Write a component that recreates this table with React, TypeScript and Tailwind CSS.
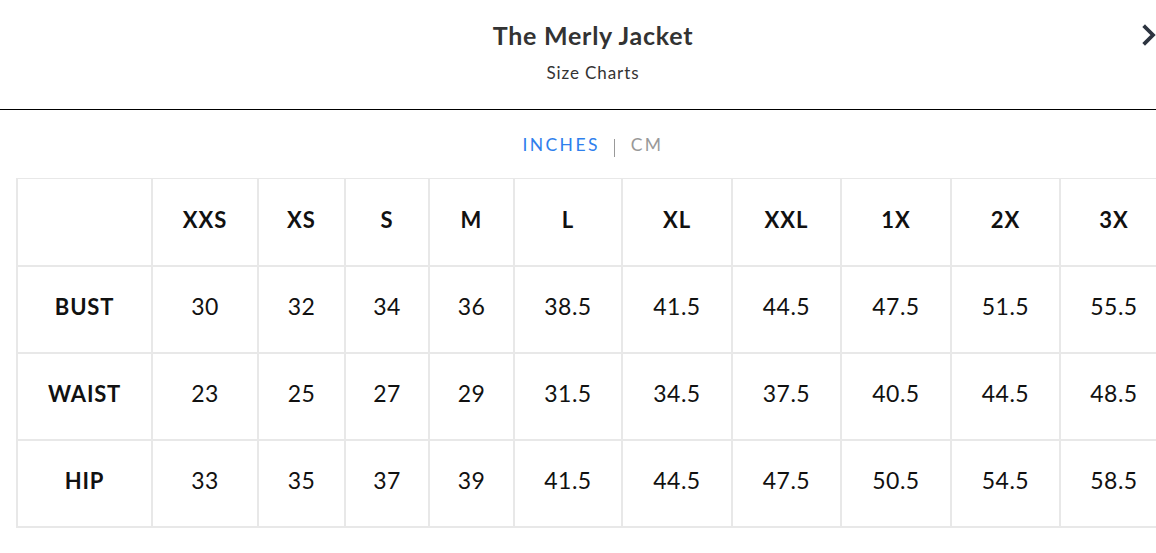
const sizes = ["XXS", "XS", "S", "M", "L", "XL", "XXL", "1X", "2X", "3X"];

const rows = [
  { label: "BUST", values: ["30", "32", "34", "36", "38.5", "41.5", "44.5", "47.5", "51.5", "55.5"] },
  { label: "WAIST", values: ["23", "25", "27", "29", "31.5", "34.5", "37.5", "40.5", "44.5", "48.5"] },
  { label: "HIP", values: ["33", "35", "37", "39", "41.5", "44.5", "47.5", "50.5", "54.5", "58.5"] },
];

const colWidths = [135, 106, 87, 84, 85, 108, 110, 109, 110, 109, 108];

const App = () => {
  return (
    <div className="w-[1156px] h-[553px] overflow-hidden bg-white font-['Lato',sans-serif] text-[#111]">
      <div className="w-[1186px]">
        {/* Header */}
        <header className="relative h-[110px] border-b border-black flex flex-col items-center pt-[19px]">
          <h1 className="text-[25px] leading-[32px] font-bold text-[#333] tracking-[0.75px]">
            The Merly Jacket
          </h1>
          <p className="mt-[11px] text-[17px] leading-[22px] text-[#333] tracking-[0.9px]">
            Size Charts
          </p>
          <button className="absolute left-[1141px] top-[24px] w-[16px] h-[22px]">
            <svg width="16" height="22" viewBox="0 0 16 22" fill="none">
              <polyline
                points="4,3 12,11 4,19"
                stroke="#2d3440"
                strokeWidth="3.8"
                strokeLinecap="square"
                strokeLinejoin="miter"
              />
            </svg>
          </button>
        </header>

        {/* Unit tabs */}
        <div className="h-[68px] flex items-center justify-center text-[17.5px] tracking-[2.4px] pt-[2px]">
          <span className="text-[#2f80ed] mr-[14px]">INCHES</span>
          <span className="w-px h-[18px] bg-[#999] mt-[6px]" />
          <span className="text-[#999] ml-[16px]">CM</span>
        </div>

        {/* Size table */}
        <table className="ml-[16px] w-[1152px] table-fixed border-collapse">
          <colgroup>
            {colWidths.map((w, i) => (
              <col key={i} style={{ width: w }} />
            ))}
          </colgroup>
          <thead>
            <tr className="h-[87px]">
              <th className="border-t border-l-2 border-b-2 border-r-2 border-[#e8e8e8]" />
              {sizes.map((s) => (
                <th
                  key={s}
                  className="border-t border-b-2 border-r-2 border-[#e8e8e8] pb-[5px] text-[22px] font-bold tracking-[1px] text-center"
                >
                  {s}
                </th>
              ))}
            </tr>
          </thead>
          <tbody>
            {rows.map((row) => (
              <tr key={row.label} className="h-[87px]">
                <td className="border-l-2 border-b-2 border-r-2 border-[#e8e8e8] pb-[5px] text-[22px] font-bold tracking-[0.8px] text-center">
                  {row.label}
                </td>
                {row.values.map((v, i) => (
                  <td
                    key={i}
                    className="border-b-2 border-r-2 border-[#e8e8e8] pb-[5px] text-[23px] tracking-[0.5px] text-center"
                  >
                    {v}
                  </td>
                ))}
              </tr>
            ))}
          </tbody>
        </table>
      </div>
    </div>
  );
};

export default App;
